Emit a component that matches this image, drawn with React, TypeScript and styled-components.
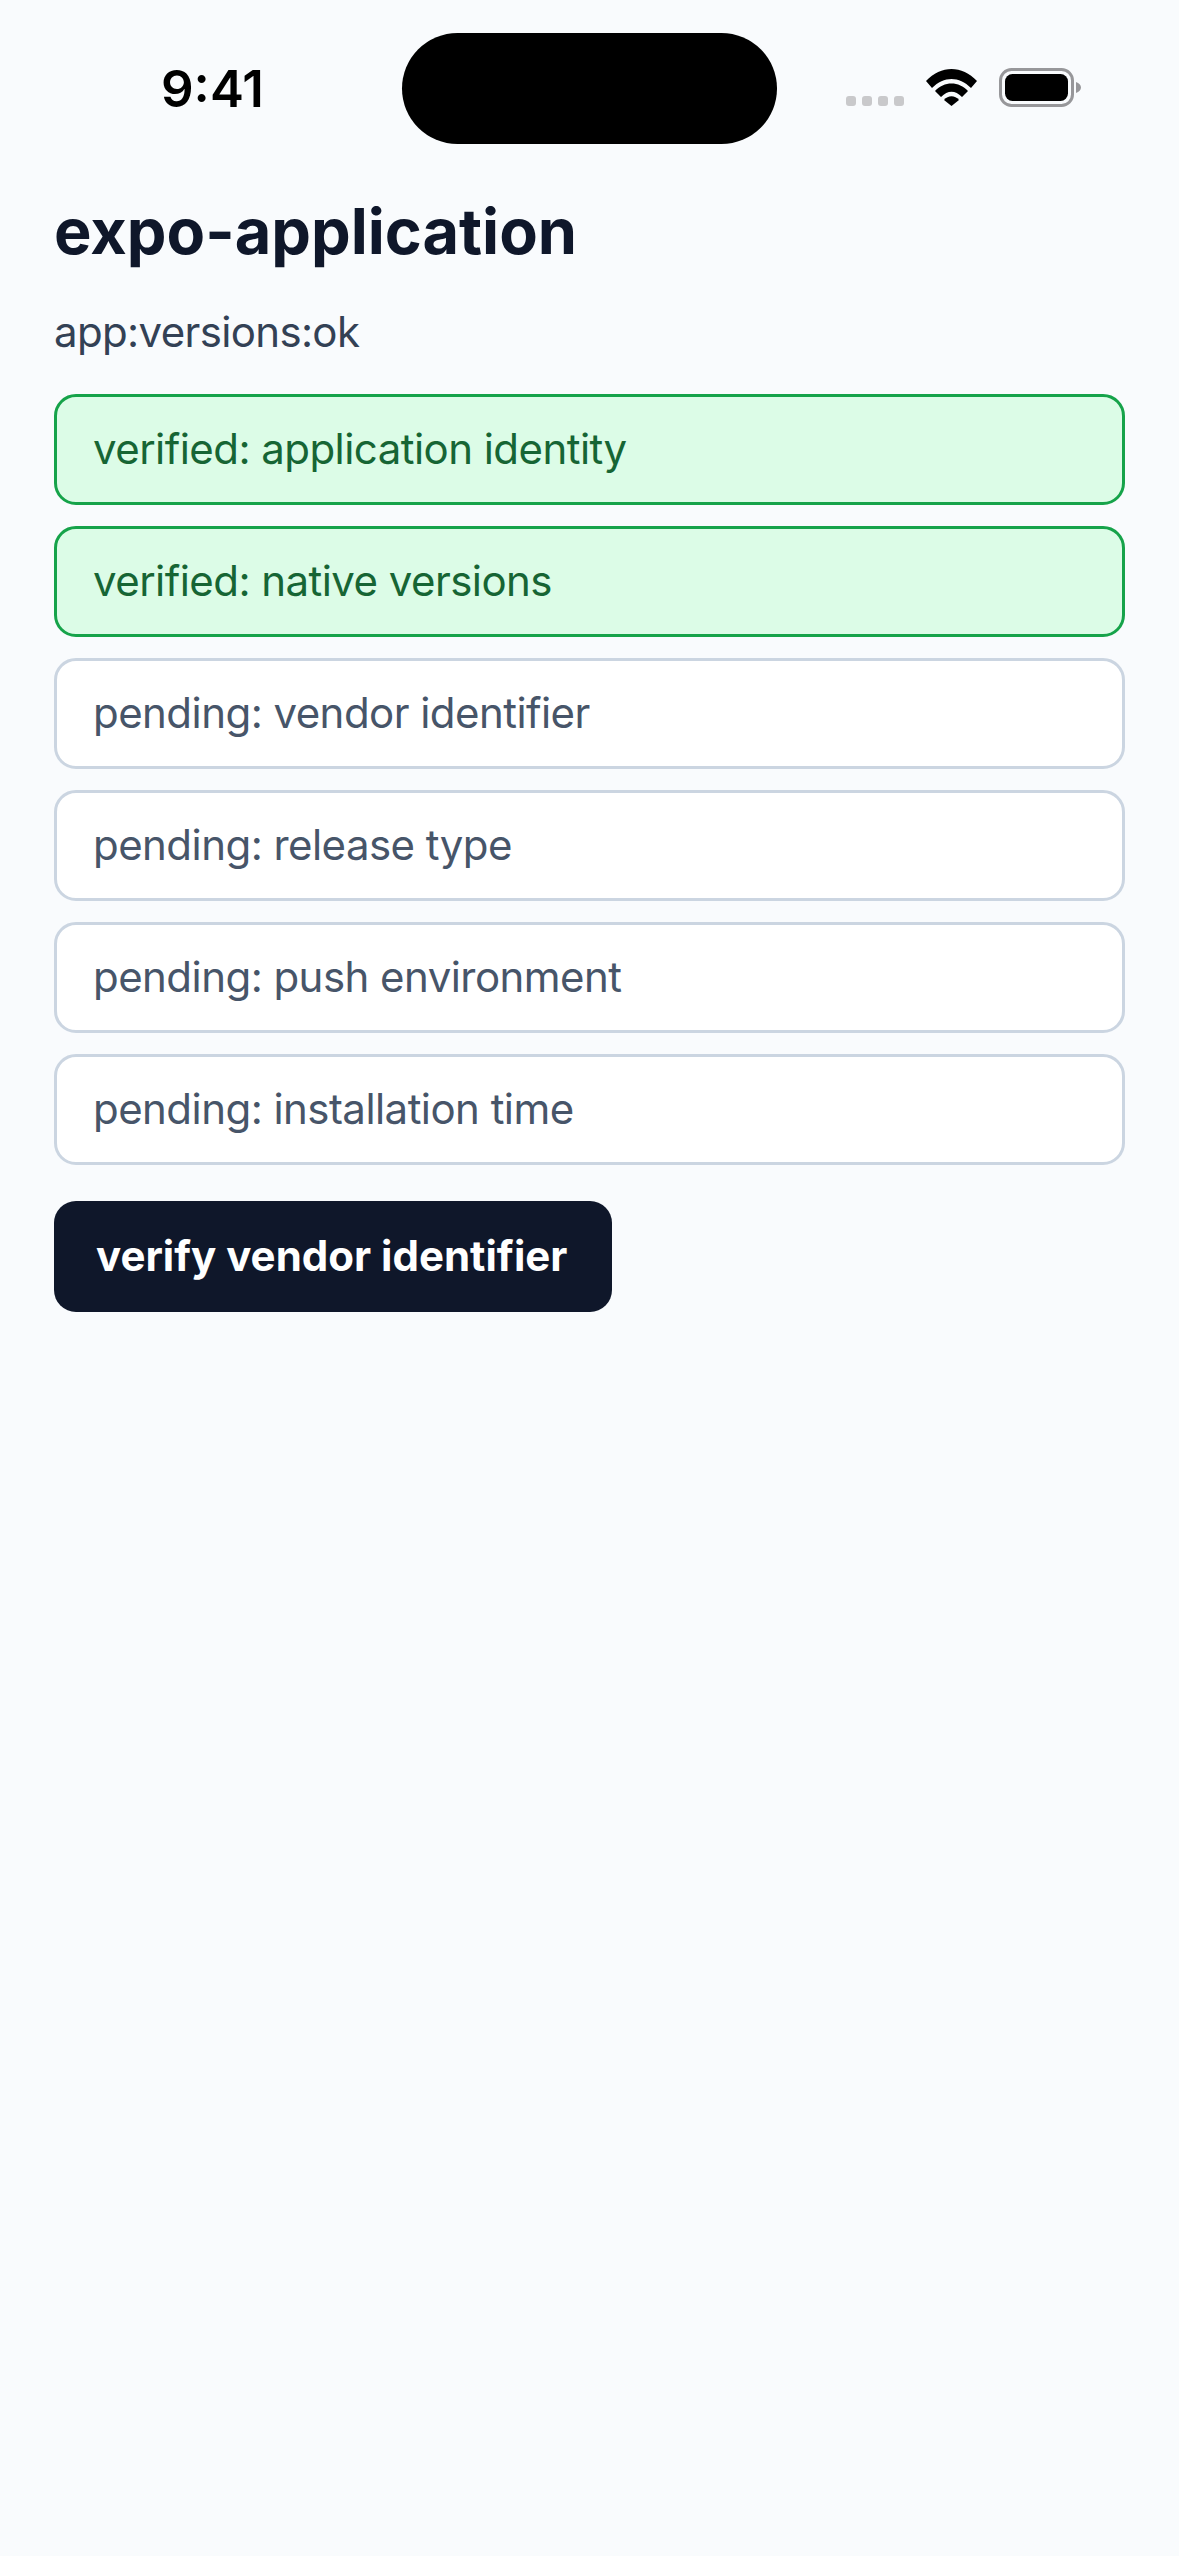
import styled, { createGlobalStyle } from "styled-components";

const GlobalStyle = createGlobalStyle`
  html, body {
    margin: 0;
    padding: 0;
    background: #f9fbfd;
  }
  * { box-sizing: border-box; }
`;

const Screen = styled.div`
  width: 1179px;
  height: 2556px;
  background: #f9fbfd;
  font-family: Inter, "Liberation Sans", sans-serif;
  overflow: hidden;
`;

const StatusBar = styled.div`
  display: grid;
  grid-template-columns: 402px 375px 1fr;
  height: 144px;
  padding-top: 33px;
`;

const Clock = styled.div`
  font-size: 51px;
  font-weight: 600;
  line-height: 62px;
  color: #000;
  padding: 25px 0 0 161px;
`;

const Island = styled.div`
  height: 111px;
  border-radius: 56px;
  background: #000;
`;

const StatusIcons = styled.div`
  display: flex;
  align-items: flex-start;
  padding: 35px 0 0 69px;
`;

const Dots = styled.div`
  display: flex;
  gap: 6px;
  margin: 28px 22px 0 0;
`;

const Dot = styled.span`
  width: 10px;
  height: 10px;
  border-radius: 3px;
  background: #c9c9cb;
`;

const Wifi = styled.svg`
  width: 51px;
  height: 37px;
  margin: 1px 22px 0 0;
`;

const Battery = styled.svg`
  width: 82px;
  height: 39px;
`;

const Content = styled.main`
  display: flex;
  flex-direction: column;
  padding: 49px 54px 0;
`;

const Title = styled.h1`
  margin: 0;
  font-size: 63px;
  font-weight: 700;
  line-height: 76px;
  color: #0f172a;
`;

const Subtitle = styled.p`
  margin: 35px 0 34px;
  font-size: 42px;
  line-height: 56px;
  letter-spacing: -0.65px;
  color: #334155;
`;

const List = styled.div`
  display: flex;
  flex-direction: column;
  gap: 21px;
`;

const Row = styled.div<{ $done: boolean }>`
  display: flex;
  align-items: center;
  height: 111px;
  padding: 0 36px 2px;
  border: 3px solid ${(p) => (p.$done ? "#16a34a" : "#cbd5e1")};
  border-radius: 22px;
  background: ${(p) => (p.$done ? "#dcfce7" : "#ffffff")};
  color: ${(p) => (p.$done ? "#166534" : "#475569")};
  font-size: 42px;
  letter-spacing: -0.55px;
`;

const VerifyButton = styled.button`
  align-self: flex-start;
  height: 111px;
  margin-top: 36px;
  padding: 0 45px 2px 42px;
  border: none;
  border-radius: 22px;
  background: #0f172a;
  color: #fff;
  font-family: inherit;
  font-size: 42px;
  font-weight: 700;
`;

const rows = [
  { label: "verified: application identity", done: true },
  { label: "verified: native versions", done: true },
  { label: "pending: vendor identifier", done: false },
  { label: "pending: release type", done: false },
  { label: "pending: push environment", done: false },
  { label: "pending: installation time", done: false },
];

export default function App() {
  return (
    <Screen>
      <GlobalStyle />
      <StatusBar>
        <Clock>9:41</Clock>
        <Island />
        <StatusIcons>
          <Dots>
            <Dot />
            <Dot />
            <Dot />
            <Dot />
          </Dots>
          <Wifi viewBox="0 0 51 37">
            <path d="M0 12 C15 -4 36 -4 51 12 L45 19 C33 7 18 7 6 19 Z" />
            <path d="M9 22 C18 12 33 12 42 22 L36 28 C29 21 22 21 15 28 Z" />
            <path d="M18 31 C22 26 29 26 33 31 L25.5 37 Z" />
          </Wifi>
          <Battery viewBox="0 0 82 39">
            <rect x="1.5" y="1.5" width="72" height="36" rx="11" fill="none" stroke="#97979a" strokeWidth="3" />
            <rect x="6" y="6" width="63" height="27" rx="7.5" fill="#000" />
            <path d="M77 14 C80 15 82 17 82 19.5 C82 22 80 24 77 25 Z" fill="#97979a" />
          </Battery>
        </StatusIcons>
      </StatusBar>
      <Content>
        <Title>expo-application</Title>
        <Subtitle>app:versions:ok</Subtitle>
        <List>
          {rows.map((row) => (
            <Row key={row.label} $done={row.done}>
              {row.label}
            </Row>
          ))}
        </List>
        <VerifyButton>verify vendor identifier</VerifyButton>
      </Content>
    </Screen>
  );
}
